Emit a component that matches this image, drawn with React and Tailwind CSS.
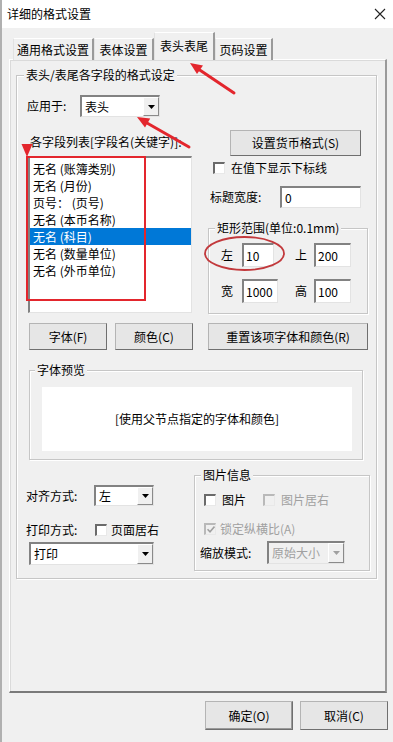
import React from "react";

const Sunken = ({ className = "", children }) => (
  <div
    className={`bg-white border-t-2 border-l-2 border-r border-b border-t-[#828282] border-l-[#828282] border-r-[#e3e3e3] border-b-[#e3e3e3] ${className}`}
  >
    {children}
  </div>
);

const Button = ({ text, className = "" }) => (
  <div
    className={`flex items-center justify-center bg-[#e6e6e6] border border-[#b4b4b4] border-r-[#6f6f6f] border-b-[#6f6f6f] ${className}`}
  >
    {text}
  </div>
);

const Arrow = ({ disabled }) => (
  <svg width="7" height="4" viewBox="0 0 7 4">
    <polygon points="0,0 7,0 3.5,4" fill={disabled ? "#a0a0a0" : "#000"} />
  </svg>
);

const Combo = ({ value, className = "", disabled }) => (
  <div
    className={`flex items-stretch border-t-2 border-l-2 border-r border-b border-t-[#828282] border-l-[#828282] border-r-[#e3e3e3] border-b-[#e3e3e3] ${
      disabled ? "bg-[#f0f0f0] text-[#a0a0a0]" : "bg-white"
    } ${className}`}
  >
    <div className="flex-1 flex items-center pl-[3px] whitespace-nowrap">{value}</div>
    <div className="w-[16px] flex items-center justify-center bg-[#f0f0f0] border border-t-white border-l-white border-r-[#8a8a8a] border-b-[#8a8a8a]">
      <Arrow disabled={disabled} />
    </div>
  </div>
);

const Check = ({ checked, disabled }) => (
  <div
    className={`w-[12px] h-[12px] shrink-0 flex items-center justify-center border-t-2 border-l-2 border-r border-b border-r-[#e8e8e8] border-b-[#e8e8e8] ${
      disabled
        ? "bg-[#f0f0f0] border-t-[#b9b9b9] border-l-[#b9b9b9]"
        : "bg-white border-t-[#6a6a6a] border-l-[#6a6a6a]"
    }`}
  >
    {checked && (
      <svg width="8" height="7" viewBox="0 0 8 7">
        <path d="M0.5 3.2 L3 5.8 L7.5 0.6" stroke="#a0a0a0" strokeWidth="1.6" fill="none" />
      </svg>
    )}
  </div>
);

const Group = ({ title, className = "", legendClass = "", children }) => (
  <div
    className={`border border-[#c6c6c6] shadow-[inset_1px_1px_0_#fff,1px_1px_0_#fff] ${className}`}
  >
    <div className={`-mt-[9px] px-[2px] w-fit bg-[#f0f0f0] whitespace-nowrap ${legendClass}`}>
      {title}
    </div>
    {children}
  </div>
);

const Tab = ({ text, active, className = "" }) => (
  <div
    className={`flex justify-center border-t border-l border-r-2 border-t-white border-l-[#e2e2e2] border-r-[#9a9a9a] bg-[#f0f0f0] ${
      active ? "h-[28px] pt-[5px] relative z-10" : "h-[22px] pt-[3px]"
    } ${className}`}
  >
    {text}
  </div>
);

const fields = [
  "无名 (账簿类别)",
  "无名 (月份)",
  "页号： (页号)",
  "无名 (本币名称)",
  "无名 (科目)",
  "无名 (数量单位)",
  "无名 (外币单位)",
];

export default function App() {
  return (
    <div className="relative w-[393px] h-[742px] overflow-hidden bg-[#f0f0f0] text-[12px] leading-[16px] text-black font-['Noto_Sans_CJK_SC','Noto_Sans',sans-serif] border-l-2 border-l-[#b0b0b0]">
      {/* title bar */}
      <div className="h-[28px] bg-white flex items-center justify-between pl-[5px] pr-[7px]">
        <span>详细的格式设置</span>
        <svg width="12" height="12" viewBox="0 0 12 12">
          <path d="M1 1 L11 11 M11 1 L1 11" stroke="#222" strokeWidth="1.1" />
        </svg>
      </div>

      {/* tabs */}
      <div className="h-[32px] flex items-end pl-[11px]">
        <Tab text="通用格式设置" className="w-[81px]" />
        <Tab text="表体设置" className="w-[60px]" />
        <Tab text="表头表尾" active className="w-[61px]" />
        <Tab text="页码设置" className="w-[58px]" />
      </div>

      {/* tab panel */}
      <div className="-mt-px ml-[7px] w-[378px] h-[634px] border-t border-l border-r-2 border-b-2 border-t-white border-l-white border-r-[#9a9a9a] border-b-[#7a7a7a] shadow-[inset_1px_1px_0_#dadada]">
        <Group
          title="表头/表尾各字段的格式设定"
          className="mt-[15px] ml-[6px] w-[361px] h-[504px]"
          legendClass="ml-[7px]"
        >
          {/* apply to */}
          <div className="mt-[12px] h-[22px] pl-[10px] flex items-center">
            <span className="w-[53px]">应用于:</span>
            <Combo value="表头" className="w-[80px] h-[22px]" />
          </div>

          {/* two columns */}
          <div className="flex items-start pl-[11px]">
            <div className="w-[164px]">
              <div className="mt-[17px] pl-[2px] w-[164px] whitespace-nowrap overflow-hidden">
                各字段列表[字段名(关键字)]:
              </div>
              <Sunken className="mt-[6px] h-[157px] pt-[2px]">
                {fields.map((f, i) => (
                  <div
                    key={f}
                    className={`h-[17px] flex items-center pl-[3px] ${
                      i === 4 ? "bg-[#0078d7] text-white" : ""
                    }`}
                  >
                    {f}
                  </div>
                ))}
              </Sunken>
            </div>

            <div className="ml-[16px] w-[160px]">
              <Button text="设置货币格式(S)" className="ml-[22px] mt-[13px] w-[131px] h-[26px]" />
              <div className="mt-[4px] h-[16px] pl-[5px] flex items-center">
                <Check />
                <span className="ml-[6px]">在值下显示下标线</span>
              </div>
              <div className="mt-[10px] h-[22px] pl-[2px] flex items-center">
                <span className="w-[70px]">标题宽度:</span>
                <Sunken className="w-[81px] h-[22px] pl-[3px] flex items-center">0</Sunken>
              </div>
              <Group
                title="矩形范围(单位:0.1mm)"
                className="mt-[20px] w-[160px] h-[86px]"
                legendClass="ml-[6px]"
              >
                <div className="mt-[7px] h-[24px] pl-[12px] flex items-center">
                  <span className="w-[21px]">左</span>
                  <Sunken className="w-[32px] h-[24px] pl-[2px] flex items-center">10</Sunken>
                  <span className="ml-[21px] w-[19px]">上</span>
                  <Sunken className="w-[37px] h-[24px] pl-[2px] flex items-center">200</Sunken>
                </div>
                <div className="mt-[12px] h-[24px] pl-[12px] flex items-center">
                  <span className="w-[21px]">宽</span>
                  <Sunken className="w-[36px] h-[24px] pl-[2px] flex items-center">1000</Sunken>
                  <span className="ml-[17px] w-[19px]">高</span>
                  <Sunken className="w-[37px] h-[24px] pl-[2px] flex items-center">100</Sunken>
                </div>
              </Group>
            </div>
          </div>

          {/* font buttons */}
          <div className="mt-[9px] h-[27px] pl-[12px] flex">
            <Button text="字体(F)" className="w-[78px] h-[27px]" />
            <Button text="颜色(C)" className="ml-[8px] w-[78px] h-[27px]" />
            <Button text="重置该项字体和颜色(R)" className="ml-[15px] w-[160px] h-[27px]" />
          </div>

          {/* preview */}
          <Group title="字体预览" className="mt-[20px] ml-[12px] w-[334px] h-[90px]" legendClass="ml-[5px]">
            <div className="mt-[9px] ml-[12px] w-[310px] h-[64px] bg-white flex items-center justify-center">
              [使用父节点指定的字体和颜色]
            </div>
          </Group>

          {/* bottom section */}
          <div className="flex items-start">
            <div className="w-[177px] pl-[9px]">
              <div className="mt-[25px] h-[21px] flex items-center">
                <span className="w-[68px]">对齐方式:</span>
                <Combo value="左" className="w-[60px] h-[21px]" />
              </div>
              <div className="mt-[16px] h-[16px] flex items-center">
                <span className="w-[69px]">打印方式:</span>
                <Check />
                <span className="ml-[4px]">页面居右</span>
              </div>
              <Combo value="打印" className="mt-[4px] ml-[3px] w-[125px] h-[23px]" />
            </div>

            <Group title="图片信息" className="mt-[15px] w-[176px] h-[96px]" legendClass="ml-[6px]">
              <div className="mt-[9px] h-[16px] pl-[9px] flex items-center">
                <Check />
                <span className="ml-[6px]">图片</span>
                <div className="ml-[17px]">
                  <Check disabled />
                </div>
                <span className="ml-[6px] text-[#a0a0a0]">图片居右</span>
              </div>
              <div className="mt-[13px] h-[16px] pl-[9px] flex items-center">
                <Check checked disabled />
                <span className="ml-[4px] text-[#a0a0a0]">锁定纵横比(A)</span>
              </div>
              <div className="mt-[4px] h-[23px] pl-[5px] flex items-center">
                <span className="w-[67px]">缩放模式:</span>
                <Combo value="原始大小" disabled className="w-[78px] h-[23px]" />
              </div>
            </Group>
          </div>
        </Group>
      </div>

      {/* dialog buttons */}
      <div className="mt-[8px] pl-[203px] flex">
        <Button
          text="确定(O)"
          className="w-[88px] h-[29px] border-[#7a7a7a] border-r-[#4a4a4a] border-b-[#4a4a4a] shadow-[inset_-1px_-1px_0_#9a9a9a]"
        />
        <Button text="取消(C)" className="ml-[7px] w-[88px] h-[29px]" />
      </div>

      {/* red annotations */}
      <svg
        className="absolute left-0 top-0 pointer-events-none"
        width="393"
        height="742"
        viewBox="0 0 393 742"
      >
        <line x1="232" y1="93" x2="197" y2="69.5" stroke="#e3262d" strokeWidth="3" strokeLinecap="round" />
        <polygon points="188,63 201,65.6 195,74" fill="#e3262d" />
        <line x1="187" y1="147" x2="145" y2="123" stroke="#e3262d" strokeWidth="3" strokeLinecap="round" />
        <polygon points="135,117 148.2,118.6 143,127.4" fill="#e3262d" />
        <polygon points="19.5,144 30.5,144 25,157" fill="#e3262d" />
        <rect x="25" y="157" width="118" height="143" fill="none" stroke="#e3262d" strokeWidth="2" />
        <ellipse cx="242.5" cy="253.5" rx="39.5" ry="16.5" fill="none" stroke="#c2393c" strokeWidth="1.8" />
      </svg>
    </div>
  );
}
